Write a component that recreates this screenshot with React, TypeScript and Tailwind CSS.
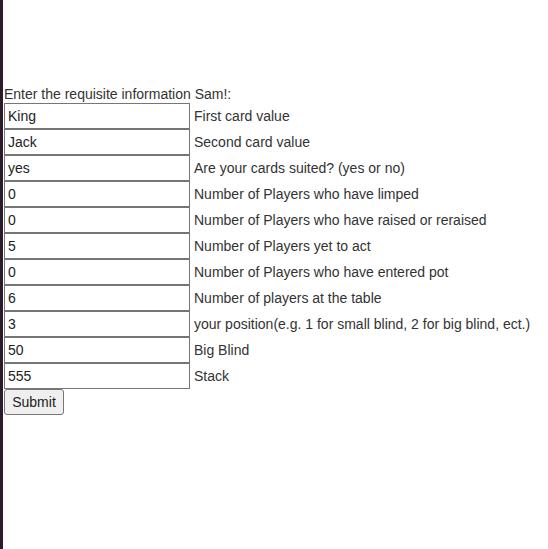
const fields = [
  { value: "King", label: "First card value" },
  { value: "Jack", label: "Second card value" },
  { value: "yes", label: "Are your cards suited? (yes or no)" },
  { value: "0", label: "Number of Players who have limped" },
  { value: "0", label: "Number of Players who have raised or reraised" },
  { value: "5", label: "Number of Players yet to act" },
  { value: "0", label: "Number of Players who have entered pot" },
  { value: "6", label: "Number of players at the table" },
  { value: "3", label: "your position(e.g. 1 for small blind, 2 for big blind, ect.)" },
  { value: "50", label: "Big Blind" },
  { value: "555", label: "Stack" },
];

export default function App() {
  return (
    <div className="flex min-h-screen bg-white text-[14px] text-[#333] font-['Liberation_Sans',Arial,sans-serif]">
      <div className="w-[3px] shrink-0 bg-[#2c1b2b]" />
      <form className="flex flex-col items-start pl-px pt-[86px]" onSubmit={(e) => e.preventDefault()}>
        <p className="leading-[17px]">Enter the requisite information Sam!:</p>
        {fields.map((f, i) => (
          <div key={i} className="flex h-[26px] items-center">
            <input
              defaultValue={f.value}
              className="h-[26px] w-[186px] border border-[#767676] bg-white px-[3px] text-[14px] text-[#222] outline-none"
            />
            <span className="ml-[4px] whitespace-nowrap">{f.label}</span>
          </div>
        ))}
        <button
          type="submit"
          className="h-[26px] w-[60px] rounded-[3px] border border-[#767676] bg-[#efefef] text-[14px] text-[#222]"
        >
          Submit
        </button>
      </form>
    </div>
  );
}
